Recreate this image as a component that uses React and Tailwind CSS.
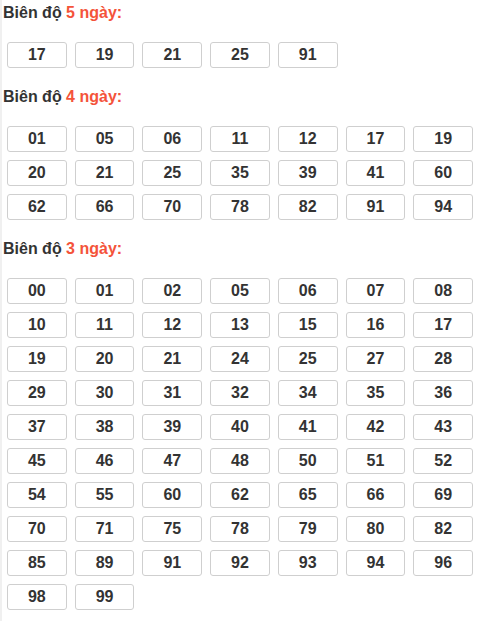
import React from 'react';

const sections = [
  { days: 5, numbers: ['17', '19', '21', '25', '91'] },
  {
    days: 4,
    numbers: ['01', '05', '06', '11', '12', '17', '19', '20', '21', '25', '35', '39', '41', '60', '62', '66', '70', '78', '82', '91', '94'],
  },
  {
    days: 3,
    numbers: [
      '00', '01', '02', '05', '06', '07', '08',
      '10', '11', '12', '13', '15', '16', '17',
      '19', '20', '21', '24', '25', '27', '28',
      '29', '30', '31', '32', '34', '35', '36',
      '37', '38', '39', '40', '41', '42', '43',
      '45', '46', '47', '48', '50', '51', '52',
      '54', '55', '60', '62', '65', '66', '69',
      '70', '71', '75', '78', '79', '80', '82',
      '85', '89', '91', '92', '93', '94', '96',
      '98', '99',
    ],
  },
];

const App = () => {
  return (
    <div className="min-h-screen bg-white border-l-2 border-[#f0f0f0] font-['Liberation_Sans',Arial,sans-serif] text-[#333]">
      <div className="pt-[3px] pl-[1px]">
        {sections.map((section) => (
          <div key={section.days} className="mb-[19px]">
            <div className="text-[16px] leading-[20px] font-bold mb-[19px]">
              Biên độ <span className="text-[#f4533a]">{section.days} ngày:</span>
            </div>
            <div className="grid grid-cols-7 gap-x-[8px] gap-y-[8px] w-[466px] ml-[4px]">
              {section.numbers.map((n, i) => (
                <div
                  key={i}
                  className="h-[26px] border border-[#cfcfcf] rounded-[3px] flex items-center justify-center text-[16px] font-bold text-[#333]"
                >
                  {n}
                </div>
              ))}
            </div>
          </div>
        ))}
      </div>
    </div>
  );
};

export default App;
